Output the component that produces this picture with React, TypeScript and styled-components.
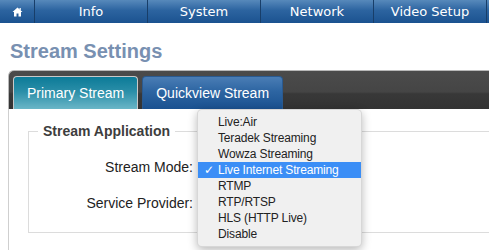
import React from "react";
import styled, { createGlobalStyle } from "styled-components";

const Global = createGlobalStyle`
  html, body { margin: 0; padding: 0; background: #fff; overflow: hidden; }
  body { font-family: "Liberation Sans", Arial, sans-serif; }
`;

const Nav = styled.nav`
  display: flex;
  height: 23px;
  background: linear-gradient(#5789bb 0%, #2c64a0 45%, #1b5290 100%);
`;

const NavHome = styled.div`
  width: 34px;
  display: flex;
  align-items: center;
  justify-content: center;
`;

const NavItem = styled.div<{ $fill?: boolean }>`
  width: 112px;
  flex: ${(p) => (p.$fill ? "1" : "none")};
  border-left: 1px solid #183e69;
  color: #fff;
  font-family: "DejaVu Sans", Verdana, sans-serif;
  font-size: 13px;
  display: flex;
  align-items: center;
  justify-content: center;
`;

const Heading = styled.h1`
  margin: 16px 0 7px 10px;
  font-size: 20px;
  line-height: 24px;
  font-weight: bold;
  color: #7890b1;
`;

const Panel = styled.section`
  margin-left: 8px;
`;

const TabBar = styled.div`
  display: flex;
  align-items: flex-end;
  gap: 4px;
  height: 33px;
  padding: 5px 0 0 4px;
  border: 1px solid #b8b8b8;
  border-bottom: none;
  border-right: none;
  border-radius: 6px 0 0 0;
  background: linear-gradient(#4b4b4b 0%, #454545 55%, #383838 60%, #333 100%);
`;

const Tab = styled.div<{ $active?: boolean }>`
  height: 32px;
  padding: 0 13px;
  display: flex;
  align-items: center;
  color: #fff;
  font-size: 14px;
  border: 1px solid ${(p) => (p.$active ? "#c9c9c9" : "#2a5a90")};
  border-bottom: none;
  border-radius: 4px 4px 0 0;
  background: ${(p) =>
    p.$active
      ? "linear-gradient(#0c7b98 0%, #2a8ea8 45%, #6ab6c7 100%)"
      : "linear-gradient(#4a7db5 0%, #2d65a2 45%, #1a5190 100%)"};
`;

const Content = styled.div`
  position: relative;
  border-left: 1px solid #cfcfcf;
  padding: 14px 0 17px 19px;
  background: #fff;
`;

const Fieldset = styled.fieldset`
  margin: 0;
  padding: 10px 0 11px 0;
  border: 1px solid #dcdcdc;
  border-right: none;
`;

const Legend = styled.legend`
  margin-left: 9px;
  padding: 0 5px;
  font-size: 14px;
  line-height: 16px;
  font-weight: bold;
  color: #3d3d3d;
`;

const Row = styled.div`
  display: flex;
  align-items: center;
  height: 36px;
`;

const Label = styled.label`
  width: 164px;
  text-align: right;
  font-size: 14px;
  color: #222;
`;

const Menu = styled.ul`
  position: absolute;
  left: 188px;
  top: 0;
  width: 165px;
  margin: 0;
  padding: 4px 0;
  list-style: none;
  background: #f0f0f0;
  border: 1px solid rgba(0, 0, 0, 0.1);
  border-radius: 5px;
  box-shadow: 0 3px 10px rgba(0, 0, 0, 0.28);
  box-sizing: border-box;
`;

const MenuItem = styled.li<{ $selected?: boolean }>`
  position: relative;
  height: 16px;
  line-height: 16px;
  padding-left: 20px;
  font-size: 12px;
  letter-spacing: -0.15px;
  color: ${(p) => (p.$selected ? "#fff" : "#222")};
  background: ${(p) => (p.$selected ? "#3b8ef6" : "transparent")};
`;

const Check = styled.span`
  position: absolute;
  left: 6px;
  top: 0;
  font-family: "DejaVu Sans", sans-serif;
  font-size: 12px;
`;

const HomeIcon = () => (
  <svg width="11" height="10" viewBox="0 0 11 10">
    <path d="M5.5 0.5 L0.5 5 L2 5 L2 9.5 L4.5 9.5 L4.5 6.5 L6.5 6.5 L6.5 9.5 L9 9.5 L9 5 L10.5 5 Z" fill="#fff" />
    <rect x="7.5" y="1" width="1.3" height="2.5" fill="#fff" />
  </svg>
);

const options = [
  "Live:Air",
  "Teradek Streaming",
  "Wowza Streaming",
  "Live Internet Streaming",
  "RTMP",
  "RTP/RTSP",
  "HLS (HTTP Live)",
  "Disable",
];

export default function App() {
  return (
    <>
      <Global />
      <Nav>
        <NavHome>
          <HomeIcon />
        </NavHome>
        <NavItem>Info</NavItem>
        <NavItem>System</NavItem>
        <NavItem>Network</NavItem>
        <NavItem>Video Setup</NavItem>
        <NavItem $fill />
      </Nav>
      <Heading>Stream Settings</Heading>
      <Panel>
        <TabBar>
          <Tab $active>Primary Stream</Tab>
          <Tab>Quickview Stream</Tab>
        </TabBar>
        <Content>
          <Fieldset>
            <Legend>Stream Application</Legend>
            <Row>
              <Label>Stream Mode:</Label>
            </Row>
            <Row>
              <Label>Service Provider:</Label>
            </Row>
          </Fieldset>
          <Menu>
            {options.map((o) => (
              <MenuItem key={o} $selected={o === "Live Internet Streaming"}>
                {o === "Live Internet Streaming" && <Check>✓</Check>}
                {o}
              </MenuItem>
            ))}
          </Menu>
        </Content>
      </Panel>
    </>
  );
}
